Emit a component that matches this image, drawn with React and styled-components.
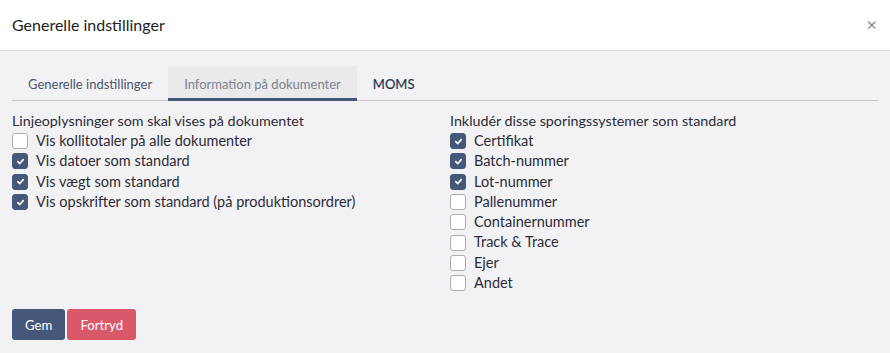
import React from 'react';
import styled, { createGlobalStyle } from 'styled-components';

const GlobalStyle = createGlobalStyle`
  html, body {
    margin: 0;
    padding: 0;
    background: #f2f2f4;
    font-family: Lato, "Open Sans", sans-serif;
    color: #333;
  }
  * { box-sizing: border-box; }
`;

const lineFields = [
  { label: 'Vis kollitotaler på alle dokumenter', checked: false },
  { label: 'Vis datoer som standard', checked: true },
  { label: 'Vis vægt som standard', checked: true },
  { label: 'Vis opskrifter som standard (på produktionsordrer)', checked: true },
];

const trackingFields = [
  { label: 'Certifikat', checked: true },
  { label: 'Batch-nummer', checked: true },
  { label: 'Lot-nummer', checked: true },
  { label: 'Pallenummer', checked: false },
  { label: 'Containernummer', checked: false },
  { label: 'Track & Trace', checked: false },
  { label: 'Ejer', checked: false },
  { label: 'Andet', checked: false },
];

function CheckRow({ label, checked }) {
  return (
    <Row>
      <Box $checked={checked}>
        {checked && (
          <svg width="9" height="9" viewBox="0 0 10 10">
            <path d="M2 5.2 L4.2 7.3 L8 2.9" fill="none" stroke="#fff" strokeWidth="1.8" strokeLinecap="round" strokeLinejoin="round" />
          </svg>
        )}
      </Box>
      <span>{label}</span>
    </Row>
  );
}

function App() {
  return (
    <>
      <GlobalStyle />
      <Modal>
        <Header>
          <Title>Generelle indstillinger</Title>
          <Close>×</Close>
        </Header>
        <Body>
          <Tabs>
            <Tab>Generelle indstillinger</Tab>
            <Tab $active>Information på dokumenter</Tab>
            <Tab $strong>MOMS</Tab>
          </Tabs>
          <Columns>
            <Column>
              <Heading>Linjeoplysninger som skal vises på dokumentet</Heading>
              {lineFields.map((f) => <CheckRow key={f.label} {...f} />)}
            </Column>
            <Column>
              <Heading>Inkludér disse sporingssystemer som standard</Heading>
              {trackingFields.map((f) => <CheckRow key={f.label} {...f} />)}
            </Column>
          </Columns>
          <Actions>
            <Button $color="#46587a">Gem</Button>
            <Button $color="#d9596a">Fortryd</Button>
          </Actions>
        </Body>
      </Modal>
    </>
  );
}

const Modal = styled.div`
  width: 890px;
  height: 353px;
  display: flex;
  flex-direction: column;
`;

const Header = styled.div`
  height: 51px;
  background: #fff;
  border-bottom: 1px solid #dcdce0;
  display: flex;
  align-items: center;
  justify-content: space-between;
  padding: 0 12px 2px 12px;
`;

const Title = styled.h4`
  margin: 0;
  font-size: 16px;
  font-weight: 400;
  color: #222;
`;

const Close = styled.span`
  font-size: 18px;
  color: #888;
  line-height: 1;
  margin-right: 1px;
`;

const Body = styled.div`
  flex: 1;
  padding: 15px 12px 0 12px;
  display: flex;
  flex-direction: column;
`;

const Tabs = styled.div`
  display: flex;
  border-bottom: 1px solid #c9c9cd;
  width: 866px;
  height: 35px;
`;

const Tab = styled.div`
  padding: 3px 16px 0 16px;
  display: flex;
  align-items: center;
  font-size: 13px;
  margin-bottom: -1px;
  color: ${(p) => (p.$active ? '#7c8391' : p.$strong ? '#24324d' : '#4a5670')};
  font-weight: 400;
  -webkit-text-stroke: ${(p) => (p.$strong ? '0.2px #24324d' : '0')};
  background: ${(p) => (p.$active ? '#eaeaec' : 'transparent')};
  border-bottom: 3px solid ${(p) => (p.$active ? '#46587a' : 'transparent')};
`;

const Columns = styled.div`
  display: grid;
  grid-template-columns: 438px 1fr;
  margin-top: 10px;
`;

const Column = styled.div`
  display: flex;
  flex-direction: column;
`;

const Heading = styled.div`
  font-size: 14.3px;
  line-height: 20px;
  color: #2c2c38;
`;

const Row = styled.label`
  display: flex;
  align-items: center;
  gap: 8px;
  font-size: 14.5px;
  line-height: 20.3px;
  color: #2c2c38;
`;

const Box = styled.span`
  flex: none;
  width: 16px;
  height: 16px;
  border-radius: 3px;
  display: inline-flex;
  align-items: center;
  justify-content: center;
  background: ${(p) => (p.$checked ? '#46587a' : '#fff')};
  border: 1px solid ${(p) => (p.$checked ? '#46587a' : '#a9adb5')};
`;

const Actions = styled.div`
  display: flex;
  gap: 2px;
  margin-top: 16px;
`;

const Button = styled.button`
  height: 31px;
  padding: 0 13px;
  border: none;
  border-radius: 3px;
  background: ${(p) => p.$color};
  color: #fff;
  font-family: Lato, sans-serif;
  font-size: 13.2px;
`;

export default App;
